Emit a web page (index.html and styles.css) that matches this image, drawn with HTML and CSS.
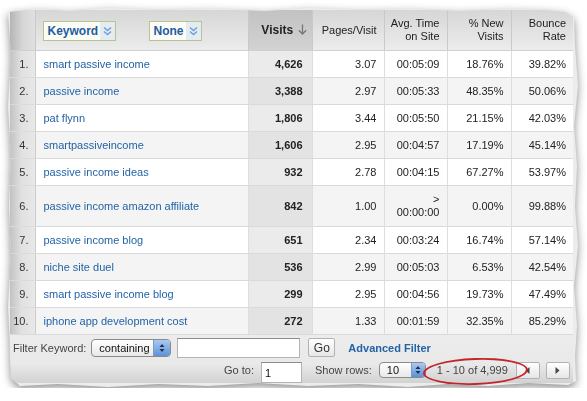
FILE: index.html
```html
<!DOCTYPE html>
<html>
<head>
<meta charset="utf-8">
<link rel="stylesheet" href="styles.css">
</head>
<body>
<div class="wrap">
  <div class="paper">
    <table class="grid">
      <colgroup>
        <col class="c-idx"><col class="c-kw"><col class="c-vis"><col class="c-pv"><col class="c-avg"><col class="c-new"><col class="c-br">
      </colgroup>
      <thead>
        <tr>
          <th class="idx"></th>
          <th class="kw">
            <div class="dims">
              <span class="dd dd-kw"><span class="dd-label">Keyword</span><span class="dd-btn"><svg width="9" height="10" viewBox="0 0 9 10"><path d="M1 1.5 L4.5 4.5 L8 1.5 M1 5.5 L4.5 8.5 L8 5.5" fill="none" stroke="#6c9fd3" stroke-width="1.4"/></svg></span></span>
              <span class="dd dd-none"><span class="dd-label">None</span><span class="dd-btn"><svg width="9" height="10" viewBox="0 0 9 10"><path d="M1 1.5 L4.5 4.5 L8 1.5 M1 5.5 L4.5 8.5 L8 5.5" fill="none" stroke="#6c9fd3" stroke-width="1.4"/></svg></span></span>
            </div>
          </th>
          <th class="vis">Visits <svg class="arrow" width="9" height="11" viewBox="0 0 9 11"><path d="M4.5 0.5 V10 M0.8 6.2 L4.5 10 L8.2 6.2" fill="none" stroke="#777" stroke-width="1.3"/></svg></th>
          <th>Pages/Visit</th>
          <th>Avg. Time<br>on Site</th>
          <th>% New<br>Visits</th>
          <th>Bounce<br>Rate</th>
        </tr>
      </thead>
      <tbody>
        <tr><td class="idx">1.</td><td class="kw"><a>smart passive income</a></td><td class="vis">4,626</td><td>3.07</td><td>00:05:09</td><td>18.76%</td><td>39.82%</td></tr>
        <tr class="alt"><td class="idx">2.</td><td class="kw"><a>passive income</a></td><td class="vis">3,388</td><td>2.97</td><td>00:05:33</td><td>48.35%</td><td>50.06%</td></tr>
        <tr><td class="idx">3.</td><td class="kw"><a>pat flynn</a></td><td class="vis">1,806</td><td>3.44</td><td>00:05:50</td><td>21.15%</td><td>42.03%</td></tr>
        <tr class="alt"><td class="idx">4.</td><td class="kw"><a>smartpassiveincome</a></td><td class="vis">1,606</td><td>2.95</td><td>00:04:57</td><td>17.19%</td><td>45.14%</td></tr>
        <tr><td class="idx">5.</td><td class="kw"><a>passive income ideas</a></td><td class="vis">932</td><td>2.78</td><td>00:04:15</td><td>67.27%</td><td>53.97%</td></tr>
        <tr class="alt tall"><td class="idx">6.</td><td class="kw"><a>passive income amazon affiliate</a></td><td class="vis">842</td><td>1.00</td><td>&gt;<br>00:00:00</td><td>0.00%</td><td>99.88%</td></tr>
        <tr><td class="idx">7.</td><td class="kw"><a>passive income blog</a></td><td class="vis">651</td><td>2.34</td><td>00:03:24</td><td>16.74%</td><td>57.14%</td></tr>
        <tr class="alt"><td class="idx">8.</td><td class="kw"><a>niche site duel</a></td><td class="vis">536</td><td>2.99</td><td>00:05:03</td><td>6.53%</td><td>42.54%</td></tr>
        <tr><td class="idx">9.</td><td class="kw"><a>smart passive income blog</a></td><td class="vis">299</td><td>2.95</td><td>00:04:56</td><td>19.73%</td><td>47.49%</td></tr>
        <tr class="alt"><td class="idx">10.</td><td class="kw"><a>iphone app development cost</a></td><td class="vis">272</td><td>1.33</td><td>00:01:59</td><td>32.35%</td><td>85.29%</td></tr>
      </tbody>
    </table>
    <div class="footer">
      <div class="frow frow1">
        <span class="lbl">Filter Keyword:</span>
        <span class="select sel-cont"><span class="sel-text">containing</span><span class="stepper"><svg width="6" height="10" viewBox="0 0 6 10"><path d="M0.5 4 L3 1 L5.5 4 Z M0.5 6 L3 9 L5.5 6 Z" fill="#1d3150"/></svg></span></span>
        <span class="textbox tb-filter"></span>
        <span class="btn btn-go">Go</span>
        <a class="adv">Advanced Filter</a>
      </div>
      <div class="frow frow2">
        <span class="lbl">Go to:</span>
        <span class="textbox tb-goto">1</span>
        <span class="lbl lbl-rows">Show rows:</span>
        <span class="select sel-rows"><span class="sel-text">10</span><span class="stepper"><svg width="6" height="10" viewBox="0 0 6 10"><path d="M0.5 4 L3 1 L5.5 4 Z M0.5 6 L3 9 L5.5 6 Z" fill="#1d3150"/></svg></span></span>
        <span class="range">1 - 10 of 4,999</span>
        <span class="btn pbtn"><svg width="5" height="7" viewBox="0 0 5 7"><path d="M4.5 0 V7 L0.5 3.5 Z" fill="#444"/></svg></span>
        <span class="btn pbtn"><svg width="5" height="7" viewBox="0 0 5 7"><path d="M0.5 0 V7 L4.5 3.5 Z" fill="#444"/></svg></span>
        <span class="ring"></span>
      </div>
    </div>
  </div>
</div>
</body>
</html>
```

FILE: styles.css
```css
html, body {
  margin: 0;
  padding: 0;
  background: #ffffff;
}

body {
  font-family: "Liberation Sans", Arial, Helvetica, sans-serif;
  font-size: 11px;
  color: #222;
}

.wrap {
  width: 570px;
  margin: 6px 0 0 8px;
  filter: drop-shadow(0 3px 4px rgba(0, 0, 0, 0.45));
}

.paper {
  background: #ececec;
  padding: 4px 5px 5px 2px;
  clip-path: polygon(
    0px 6px, 30px 3px, 62px 5px, 100px 2px, 150px 4px, 205px 3px, 258px 5px, 300px 2px,
    352px 4px, 402px 3px, 452px 5px, 500px 3px, 538px 4px, 558px 6px, 566px 12px,
    567px 40px, 570px 80px, 566px 120px, 569px 160px, 567px 200px, 570px 240px,
    566px 280px, 569px 320px, 567px 350px, 568px 375px, 560px 379px,
    520px 377px, 480px 380px, 440px 378px, 400px 381px, 350px 378px, 300px 380px,
    250px 377px, 200px 380px, 150px 378px, 100px 381px, 50px 378px, 12px 380px,
    3px 372px, 2px 340px, 0px 300px, 3px 250px, 1px 200px, 3px 150px, 0px 100px, 3px 50px, 1px 20px
  );
}

.grid {
  width: 563px;
  border-collapse: collapse;
  table-layout: fixed;
}

.c-idx { width: 25px; }
.c-kw { width: 213px; }
.c-vis { width: 64px; }
.c-pv { width: 72px; }
.c-avg { width: 63px; }
.c-new { width: 64px; }
.c-br { width: 62px; }

.grid th {
  height: 40px;
  padding: 0 7px 0 0;
  text-align: right;
  vertical-align: middle;
  font-weight: normal;
  font-size: 11px;
  line-height: 13px;
  color: #222;
  background: linear-gradient(to bottom, #d6d6d6, #ececec);
  border-left: 1px solid #c9c9c9;
  border-bottom: 1px solid #cfcfcf;
}

.grid th.idx {
  border-left: none;
  background: linear-gradient(to right, #b5b5b5, #d6d6d6 50%, #e0e0e0);
}

.grid th.kw {
  text-align: left;
  padding: 0 0 0 7px;
}

.grid th.vis {
  font-weight: bold;
  font-size: 12px;
  background: linear-gradient(to bottom, #c2c2c2, #d2d2d2);
  padding-right: 5px;
}

.arrow {
  vertical-align: -1px;
  margin-left: 1px;
}

.dims {
  display: flex;
  align-items: center;
  gap: 33px;
  padding-top: 1px;
}

.dd {
  display: flex;
  height: 18px;
  border: 1px solid #b7c48e;
  background: #fbfcf6;
}

.dd-kw { width: 71px; }
.dd-none { width: 51px; }

.dd-label {
  flex: 1;
  font-weight: bold;
  font-size: 12px;
  color: #1f5c9f;
  line-height: 18px;
  padding-left: 4px;
}

.dd-btn {
  width: 15px;
  background: #e3ebf3;
  display: flex;
  align-items: center;
  justify-content: center;
}

.grid td {
  height: 26px;
  padding: 0 7px 0 0;
  text-align: right;
  vertical-align: middle;
  background: #ffffff;
  border-left: 1px solid #dedede;
  border-bottom: 1px solid #dadada;
  line-height: 13px;
  color: #222;
}

.grid tr.alt td {
  background: #f4f4f4;
}

.grid tr.tall td {
  height: 40px;
}

.grid td.idx,
.grid tr.alt td.idx {
  border-left: none;
  border-right: 1px solid #cbcbcb;
  padding-right: 6px;
  background: linear-gradient(to right, #c2c2c2, #e0e0e0 45%, #e8e8e8);
  color: #333;
}

.grid td.kw {
  text-align: left;
  padding: 0 0 0 8px;
}

.grid td.kw a {
  color: #2463a6;
  text-decoration: none;
}

.grid td.vis {
  font-weight: bold;
  background: #ebebeb;
  padding-right: 9px;
}

.grid tr.alt td.vis {
  background: #e3e3e3;
}

.footer {
  background: linear-gradient(to bottom, #ececec 0%, #e9e9e9 60%, #d2d2d2 100%);
  height: 46px;
  padding-top: 2px;
}

.frow {
  display: flex;
  align-items: center;
  color: #444;
}

.frow1 {
  height: 21px;
  padding-left: 3px;
}

.frow2 {
  height: 24px;
  padding-left: 214px;
  position: relative;
}

.lbl {
  color: #444;
  font-size: 11px;
}

.select {
  display: flex;
  align-items: center;
  height: 16px;
  border: 1px solid #8a8a8a;
  border-radius: 4px;
  background: linear-gradient(to bottom, #ffffff, #e8e8e8);
  overflow: hidden;
  color: #111;
}

.sel-cont {
  width: 78px;
  margin-left: 5px;
}

.sel-rows {
  width: 45px;
  height: 14px;
  margin-left: 7px;
}

.sel-text {
  flex: 1;
  padding-left: 7px;
  font-size: 11px;
}

.stepper {
  width: 16px;
  height: 100%;
  background: linear-gradient(to bottom, #a9c9f1, #5d92d9);
  display: flex;
  align-items: center;
  justify-content: center;
  border-left: 1px solid #7a9cc8;
}

.sel-rows .stepper {
  width: 13px;
}

.textbox {
  display: block;
  background: #ffffff;
  border: 1px solid #b4b4b4;
  border-top-color: #8c8c8c;
  box-sizing: border-box;
  color: #111;
}

.tb-filter {
  width: 123px;
  height: 20px;
  margin-left: 6px;
}

.tb-goto {
  width: 41px;
  height: 21px;
  margin-left: 7px;
  margin-top: 4px;
  padding: 4px 0 0 3px;
  font-size: 11px;
}

.btn {
  display: flex;
  align-items: center;
  justify-content: center;
  border: 1px solid #b2b2b2;
  border-radius: 2px;
  background: linear-gradient(to bottom, #ffffff, #e6e6e6);
  box-sizing: border-box;
}

.btn-go {
  width: 27px;
  height: 19px;
  margin-left: 8px;
  font-size: 12px;
  color: #333;
}

.adv {
  margin-left: 13px;
  font-weight: bold;
  color: #2463a6;
  font-size: 11px;
}

.lbl-rows {
  margin-left: 13px;
}

.range {
  margin-left: 11px;
  color: #444;
  font-size: 11px;
}

.pbtn {
  width: 24px;
  height: 17px;
  margin-left: 8px;
}

.pbtn + .pbtn {
  margin-left: 6px;
}

.ring {
  position: absolute;
  left: 413px;
  top: 0px;
  width: 101px;
  height: 23px;
  border: 2px solid #c3262a;
  border-radius: 50%;
  transform: rotate(-2deg);
}
```
